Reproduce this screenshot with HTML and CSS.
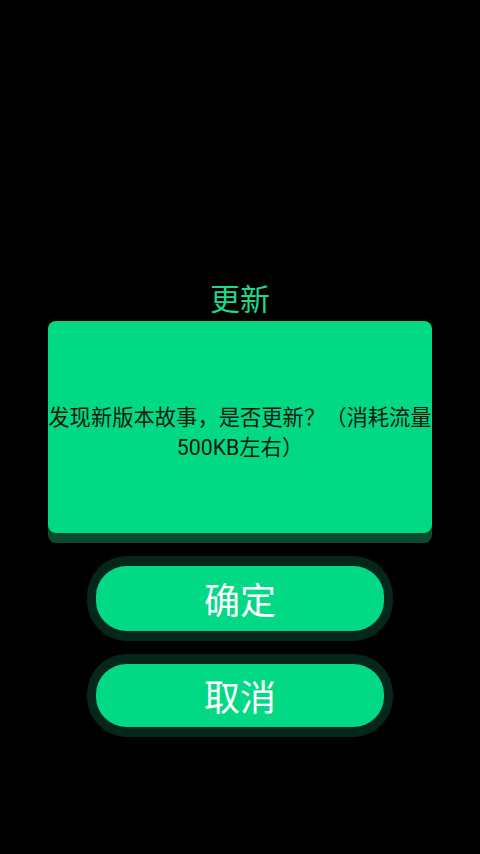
FILE: index.html
```html
<!DOCTYPE html>
<html lang="zh">
<head>
<meta charset="utf-8">
<title>更新</title>
<link rel="stylesheet" href="styles.css">
</head>
<body>
<div class="screen">
  <div class="title">更新</div>
  <div class="dialog">
    <p class="message">发现新版本故事，是否更新？（消耗流量<br>500KB左右）</p>
  </div>
  <div class="actions">
    <button class="btn">确定</button>
    <button class="btn">取消</button>
  </div>
</div>
</body>
</html>
```

FILE: styles.css
```css
html, body {
  margin: 0;
  padding: 0;
  background: #000;
  width: 480px;
  height: 854px;
  overflow: hidden;
}
.screen {
  display: flex;
  flex-direction: column;
  align-items: center;
  padding-top: 280px;
  font-family: Roboto, "Noto Sans CJK SC", sans-serif;
}
.title {
  font-size: 30px;
  line-height: 40px;
  height: 40px;
  color: #1ed98a;
  margin-bottom: 1px;
}
.dialog {
  box-sizing: border-box;
  width: 384px;
  height: 212px;
  background: #02d984;
  border-radius: 8px;
  box-shadow: 0 10px 0 #0a4a2e;
  display: flex;
  align-items: center;
  justify-content: center;
  margin-bottom: 23px;
}
.message {
  margin: 0;
  padding-top: 12px;
  font-size: 21.3px;
  line-height: 30px;
  color: #0a1a12;
  text-align: center;
  white-space: nowrap;
}
.actions {
  display: flex;
  flex-direction: column;
  align-items: center;
  gap: 13px;
}
.btn {
  box-sizing: border-box;
  width: 306px;
  height: 85px;
  border: 10px solid #05261a;
  border-left-width: 9px;
  border-right-width: 9px;
  border-radius: 40px;
  background: #02d984;
  color: #fff;
  font-family: Roboto, "Noto Sans CJK SC", sans-serif;
  font-size: 36px;
  line-height: 65px;
  padding: 4px 0 0;
  margin: 0;
}
.btn + .btn {
  height: 83px;
  line-height: 63px;
}
```
